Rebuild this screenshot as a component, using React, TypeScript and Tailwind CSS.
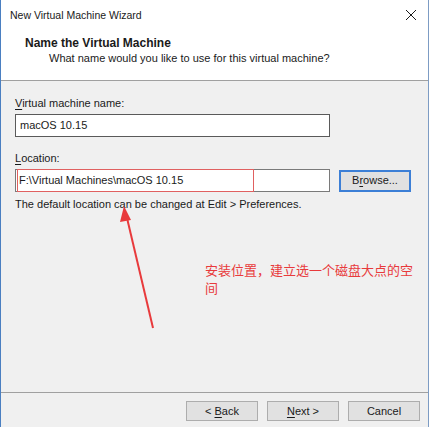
import React from "react";

const font = { fontFamily: '"Liberation Sans", "Noto Sans CJK SC", sans-serif' };

function U({ children }: { children: React.ReactNode }) {
  return <span className="underline underline-offset-[2px] decoration-[1px]">{children}</span>;
}

export default function App() {
  return (
    <div
      className="relative w-[429px] h-[427px] bg-[#f0f0f0] border-l border-l-[#4a7fc1] border-r border-r-[#7d9cc4] flex flex-col text-[11px] text-[#1a1a1a] overflow-hidden"
      style={font}
    >
      {/* Title + header (white) */}
      <div className="bg-white h-[81px] border-b border-b-[#a0a0a0] flex flex-col">
        <div className="h-[30px] flex items-center justify-between pl-[9px] pr-[10px]">
          <span className="text-[10.5px] text-[#1a1a1a] leading-none">New Virtual Machine Wizard</span>
          <svg width="12" height="12" viewBox="0 0 12 12" className="mr-[1px]">
            <path d="M1 1 L11 11 M11 1 L1 11" stroke="#1a1a1a" strokeWidth="1" />
          </svg>
        </div>
        <div className="pl-[24px] pt-[6px] flex flex-col">
          <span className="font-bold text-[12px] leading-[15px]">Name the Virtual Machine</span>
          <span className="pl-[24px] leading-[15px]">What name would you like to use for this virtual machine?</span>
        </div>
      </div>

      {/* Body */}
      <div className="flex-1 flex flex-col pl-[14px] pr-[17px] pt-[15px]">
        <span className="leading-[15px]">
          <U>V</U>irtual machine name:
        </span>
        <div className="mt-[3px] w-[315px] h-[23px] bg-white border border-[#5a5a5a] flex items-center pl-[4px]">
          macOS 10.15
        </div>
        <span className="mt-[14px] leading-[15px]">
          <U>L</U>ocation:
        </span>
        <div className="mt-[3px] flex items-center">
          <div className="w-[315px] h-[23px] bg-white border border-[#7a7a7a] flex items-center pl-[3px]">
            F:\Virtual Machines\macOS 10.15
          </div>
          <div className="ml-[9px] w-[72px] h-[22px] bg-[#e1e1e1] border-2 border-[#3c7fd6] flex items-center justify-center">
            B<U>r</U>owse...
          </div>
        </div>
        <span className="mt-[5px] leading-[15px]">The default location can be changed at Edit &gt; Preferences.</span>
        <div className="mt-[49px] ml-[190px] w-[215px] text-[13px] leading-[18px] text-[#e83a3c]" style={{ fontFamily: '"Noto Sans CJK SC", sans-serif' }}>
          安装位置，建立选一个磁盘大点的空间
        </div>
      </div>

      {/* Footer */}
      <div className="h-[35px] border-t border-t-[#a0a0a0] flex items-start justify-end gap-[9px] pt-[8px] pr-[8px]">
        <div className="w-[72px] h-[20px] bg-[#e1e1e1] border border-[#adadad] flex items-center justify-center">
          &lt;&nbsp;<U>B</U>ack
        </div>
        <div className="w-[72px] h-[20px] bg-[#e1e1e1] border border-[#adadad] flex items-center justify-center">
          <U>N</U>ext &gt;
        </div>
        <div className="w-[72px] h-[20px] bg-[#e1e1e1] border border-[#adadad] flex items-center justify-center">
          Cancel
        </div>
      </div>

      {/* Annotations */}
      <div className="absolute left-[16px] top-[169px] w-[237px] h-[23px] border border-[#e06060]" />
      <svg className="absolute left-0 top-0 pointer-events-none" width="429" height="427">
        <line x1="152" y1="328" x2="126" y2="218" stroke="#e83a3c" strokeWidth="2" />
        <polygon points="123,206 119,222 130,220" fill="#e83a3c" />
      </svg>
    </div>
  );
}
